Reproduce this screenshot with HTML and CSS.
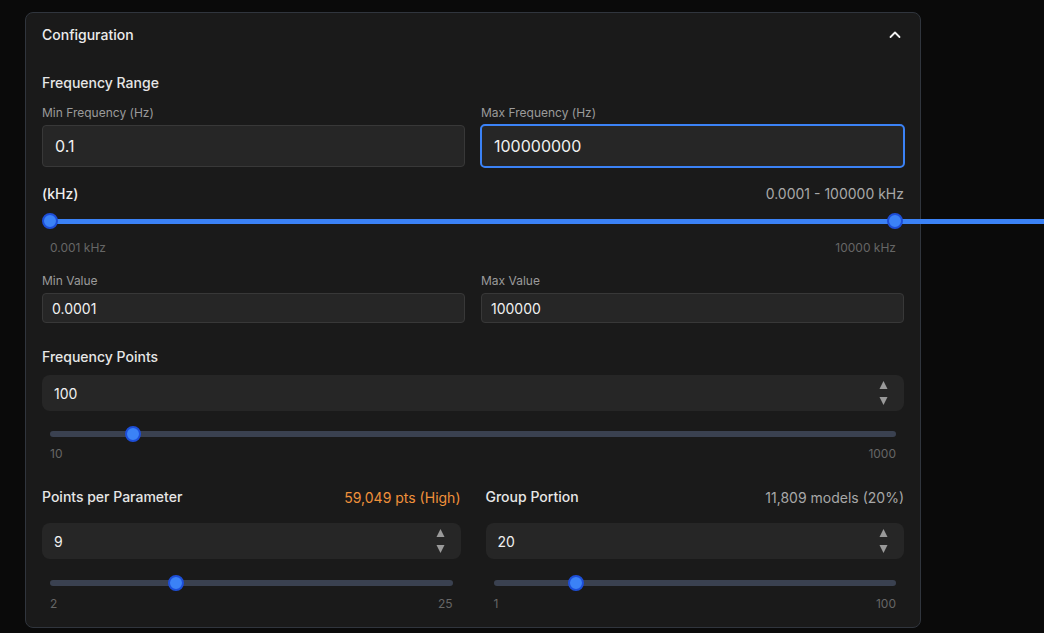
FILE: index.html
```html
<!DOCTYPE html>
<html lang="en">
<head>
<meta charset="utf-8">
<title>Configuration</title>
<link rel="stylesheet" href="styles.css">
</head>
<body>
<section class="card">
  <header class="card-header">
    <span class="card-title">Configuration</span>
    <svg class="chevron" width="14" height="14" viewBox="0 0 14 14"><path d="M2.5 9 L7 4.5 L11.5 9" fill="none" stroke="#f2f2f2" stroke-width="1.8" stroke-linecap="round" stroke-linejoin="round"/></svg>
  </header>
  <div class="card-body">
    <h3 class="section-title">Frequency Range</h3>
    <div class="grid-2">
      <div class="field">
        <label class="label">Min Frequency (Hz)</label>
        <input class="text-input large" type="text" value="0.1">
      </div>
      <div class="field">
        <label class="label">Max Frequency (Hz)</label>
        <input class="text-input large focused" type="text" value="100000000">
      </div>
    </div>

    <div class="row-between unit-row">
      <span class="unit-title">(kHz)</span>
      <span class="unit-range">0.0001 - 100000 kHz</span>
    </div>
    <div class="dual-range">
      <div class="dual-track"></div>
      <span class="thumb thumb-min"></span>
      <span class="thumb thumb-max"></span>
    </div>
    <div class="row-between ticks dual-ticks">
      <span>0.001 kHz</span>
      <span>10000 kHz</span>
    </div>

    <div class="grid-2 value-row">
      <div class="field">
        <label class="label">Min Value</label>
        <input class="text-input small" type="text" value="0.0001">
      </div>
      <div class="field">
        <label class="label">Max Value</label>
        <input class="text-input small" type="text" value="100000">
      </div>
    </div>

    <h3 class="section-title points-title">Frequency Points</h3>
    <div class="number-box tall">
      <input class="number-input" type="text" value="100">
      <svg class="spinner" width="9" height="26" viewBox="0 0 9 26"><path d="M4.5 1 L8.5 9 L0.5 9 Z" fill="#9a9a9a"/><path d="M0.5 17 L8.5 17 L4.5 25 Z" fill="#9a9a9a"/></svg>
    </div>
    <div class="slider-wrap">
      <input class="slider" type="range" min="10" max="1000" value="100">
      <div class="row-between ticks">
        <span>10</span>
        <span>1000</span>
      </div>
    </div>

    <div class="grid-2 bottom-grid">
      <div class="field">
        <div class="row-between">
          <span class="section-title inline">Points per Parameter</span>
          <span class="stat warn">59,049 pts (High)</span>
        </div>
        <div class="number-box">
          <input class="number-input" type="text" value="9">
          <svg class="spinner" width="9" height="26" viewBox="0 0 9 26"><path d="M4.5 1 L8.5 9 L0.5 9 Z" fill="#9a9a9a"/><path d="M0.5 17 L8.5 17 L4.5 25 Z" fill="#9a9a9a"/></svg>
        </div>
        <div class="slider-wrap">
          <input class="slider" type="range" min="2" max="25" value="9">
          <div class="row-between ticks">
            <span>2</span>
            <span>25</span>
          </div>
        </div>
      </div>
      <div class="field">
        <div class="row-between">
          <span class="section-title inline">Group Portion</span>
          <span class="stat">11,809 models (20%)</span>
        </div>
        <div class="number-box">
          <input class="number-input" type="text" value="20">
          <svg class="spinner" width="9" height="26" viewBox="0 0 9 26"><path d="M4.5 1 L8.5 9 L0.5 9 Z" fill="#9a9a9a"/><path d="M0.5 17 L8.5 17 L4.5 25 Z" fill="#9a9a9a"/></svg>
        </div>
        <div class="slider-wrap">
          <input class="slider" type="range" min="1" max="100" value="20">
          <div class="row-between ticks">
            <span>1</span>
            <span>100</span>
          </div>
        </div>
      </div>
    </div>
  </div>
</section>
</body>
</html>
```

FILE: styles.css
```css
* { box-sizing: border-box; }
html, body { overflow: hidden; }
body {
  margin: 0;
  background: #0a0a0a;
  font-family: Inter, "Noto Sans", "Liberation Sans", sans-serif;
  color: #e8e8e8;
  height: 633px;
}
.card {
  margin: 12px 0 0 25px;
  width: 896px;
  background: #1a1a1a;
  border: 1px solid #30353d;
  border-radius: 8px;
}
.card-header {
  display: flex;
  justify-content: space-between;
  align-items: center;
  padding: 12px 16px 12px 16px;
  height: 44px;
}
.card-title {
  font-size: 14px;
  font-weight: 500;
  line-height: 20px;
  color: #ececec;
}
.chevron { margin-right: 2px; }
.card-body {
  padding: 16px 16px 15px 16px;
}
.section-title {
  margin: 0;
  font-size: 14px;
  font-weight: 500;
  line-height: 20px;
  color: #e6e6e6;
}
.section-title.inline { display: block; }
.grid-2 {
  display: grid;
  grid-template-columns: 1fr 1fr;
  column-gap: 16px;
  margin-top: 12px;
}
.field { display: flex; flex-direction: column; min-width: 0; }
.label {
  font-size: 12px;
  line-height: 16px;
  color: #9b9b9b;
  margin-bottom: 4px;
}
.text-input {
  width: 100%;
  background: #262626;
  border: 1px solid #383838;
  border-radius: 4px;
  color: #f0f0f0;
  font-family: inherit;
  outline: none;
}
.text-input.large {
  height: 42px;
  font-size: 16px;
  padding: 0 12px;
}
.text-input.focused {
  border: 2px solid #3b82f6;
  margin: -1px;
  width: calc(100% + 2px);
  height: 44px;
  padding: 0 12px;
  border-radius: 5px;
}
.text-input.small {
  height: 30px;
  font-size: 14px;
  padding: 0 9px;
}
.row-between {
  display: flex;
  justify-content: space-between;
  align-items: center;
}
.unit-row { margin-top: 16px; height: 20px; }
.unit-title { font-size: 14px; font-weight: 500; color: #f0f0f0; }
.unit-range { font-size: 14px; color: #a8a8a8; }
.dual-range {
  position: relative;
  height: 16px;
  margin-top: 10px;
}
.dual-track {
  position: absolute;
  left: 1px;
  top: 6px;
  width: 1001px;
  height: 5px;
  background: #3b82f6;
}
.thumb {
  position: absolute;
  top: 0;
  width: 16px;
  height: 16px;
  border-radius: 50%;
  background: #3b82f6;
  border: 2px solid #1d4ed8;
}
.thumb-min { left: 0; }
.thumb-max { right: 1px; }
.ticks {
  font-size: 12px;
  line-height: 16px;
  color: #666;
}
.dual-ticks { margin: 11px 8px 0 8px; }
.value-row { margin-top: 17px; }
.points-title { margin-top: 24px; }
.number-box {
  display: flex;
  align-items: center;
  background: #262626;
  border-radius: 8px;
  margin-top: 8px;
  height: 36px;
  padding: 0 16px 0 12px;
}
.number-box.tall { height: 36px; }
.number-input {
  flex: 1;
  min-width: 0;
  background: transparent;
  border: none;
  outline: none;
  color: #f0f0f0;
  font-family: inherit;
  font-size: 14px;
  padding: 0;
}
.spinner { display: block; }
.slider-wrap { margin: 15px 8px 0 8px; }
.slider {
  -webkit-appearance: none;
  appearance: none;
  display: block;
  width: 100%;
  height: 16px;
  margin: 0;
  background: transparent;
}
.slider::-webkit-slider-runnable-track {
  height: 6px;
  border-radius: 3px;
  background: #3a4150;
}
.slider::-webkit-slider-thumb {
  -webkit-appearance: none;
  width: 16px;
  height: 16px;
  margin-top: -5px;
  border-radius: 50%;
  background: #3b82f6;
  border: 2px solid #1d4ed8;
}
.slider-wrap .ticks { margin-top: 4px; }
.bottom-grid {
  margin-top: 25px;
  column-gap: 25px;
}
.bottom-grid .number-box { margin-top: 16px; }
.bottom-grid .slider-wrap { margin-top: 16px; }
.bottom-grid .slider-wrap .ticks { margin-top: 5px; }
.stat { font-size: 14px; color: #a8a8a8; }
.stat.warn { color: #f0913a; }
```
